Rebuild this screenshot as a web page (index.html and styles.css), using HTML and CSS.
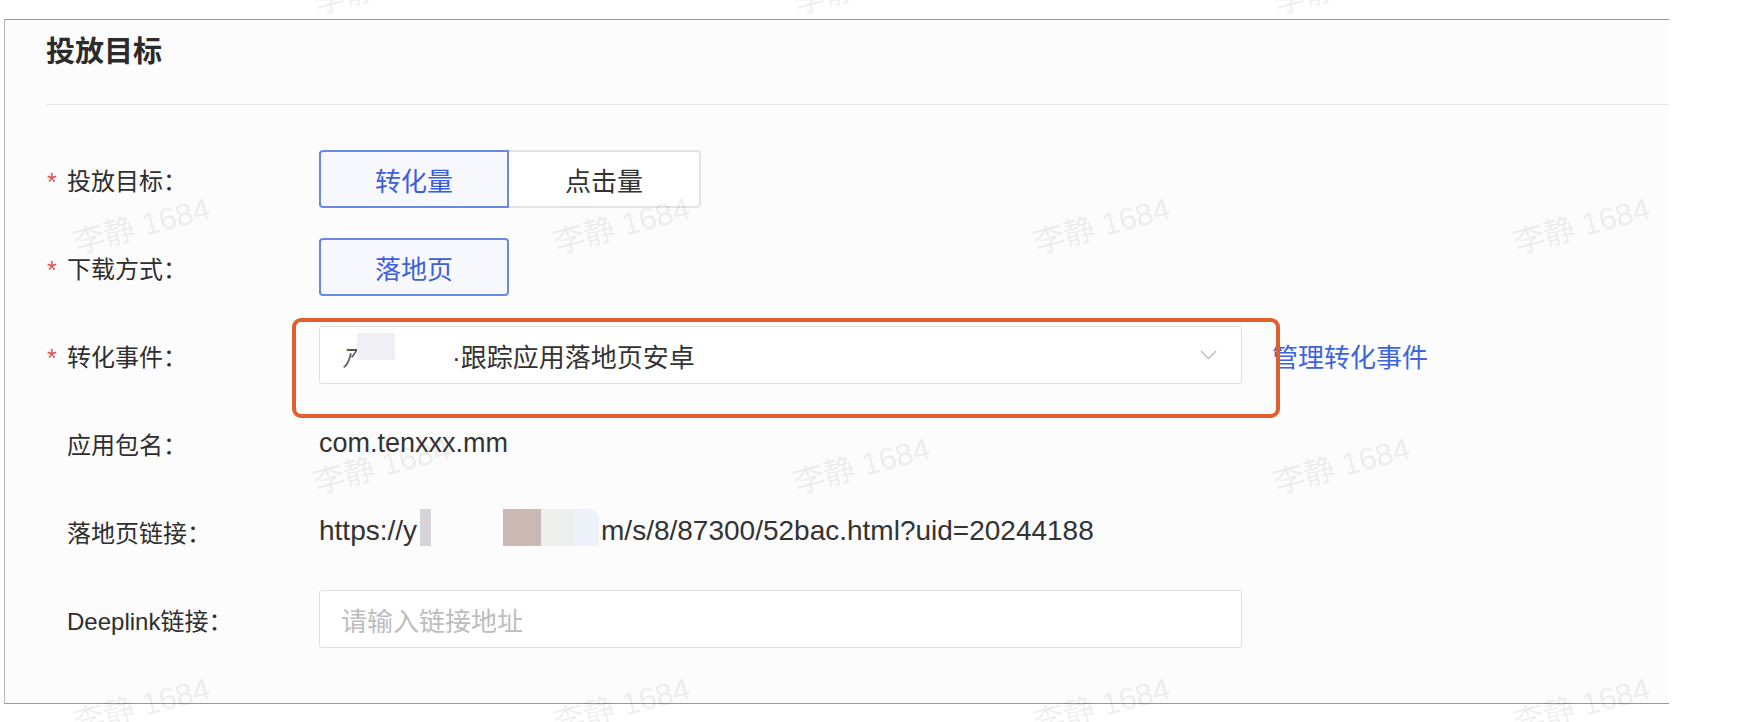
FILE: index.html
```html
<!DOCTYPE html>
<html lang="zh-CN">
<head>
<meta charset="utf-8">
<title>投放目标</title>
<link rel="stylesheet" href="styles.css">
</head>
<body>
<div class="page">
  <section class="card">
    <header class="card-head">
      <h2 class="card-title">投放目标</h2>
    </header>
    <div class="form">
      <div class="row">
        <div class="label"><span class="req">*</span>投放目标：</div>
        <div class="seg">
          <span class="seg-btn first active">转化量</span>
          <span class="seg-btn last">点击量</span>
        </div>
      </div>
      <div class="row">
        <div class="label"><span class="req">*</span>下载方式：</div>
        <div class="seg">
          <span class="seg-btn single active">落地页</span>
        </div>
      </div>
      <div class="row row-event">
        <div class="label"><span class="req">*</span>转化事件：</div>
        <div class="select">
          <span class="sel-head">ｱ</span>
          <span class="mask mask-sel"></span>
          <span class="sel-text">·跟踪应用落地页安卓</span>
          <svg class="chev" width="17" height="10" viewBox="0 0 17 10"><polyline points="1,1 8.5,8.5 16,1" fill="none" stroke="#bdbdbd" stroke-width="1.4"/></svg>
        </div>
        <a class="link">管理转化事件</a>
        <div class="annot"></div>
      </div>
      <div class="row">
        <div class="label plain">应用包名：</div>
        <div class="value">com.tenxxx.mm</div>
      </div>
      <div class="row">
        <div class="label plain">落地页链接：</div>
        <div class="value url"><span>https://y</span><span class="mask m1"></span><span class="mask m2"></span><span class="mask m3"></span><span class="mask m4"></span><span class="mask m5"></span><span>m/s/8/87300/52bac.html?uid=20244188</span></div>
      </div>
      <div class="row">
        <div class="label plain">Deeplink链接：</div>
        <div class="input"><span class="placeholder">请输入链接地址</span></div>
      </div>
    </div>
  </section>
  <div class="wm-layer" aria-hidden="true">
    <span class="wm" style="left:381px;top:-17px">李静 1684</span>
    <span class="wm" style="left:861px;top:-17px">李静 1684</span>
    <span class="wm" style="left:1341px;top:-17px">李静 1684</span>
    <span class="wm" style="left:141px;top:223px">李静 1684</span>
    <span class="wm" style="left:621px;top:223px">李静 1684</span>
    <span class="wm" style="left:1101px;top:223px">李静 1684</span>
    <span class="wm" style="left:1581px;top:223px">李静 1684</span>
    <span class="wm" style="left:381px;top:463px">李静 1684</span>
    <span class="wm" style="left:861px;top:463px">李静 1684</span>
    <span class="wm" style="left:1341px;top:463px">李静 1684</span>
    <span class="wm" style="left:141px;top:703px">李静 1684</span>
    <span class="wm" style="left:621px;top:703px">李静 1684</span>
    <span class="wm" style="left:1101px;top:703px">李静 1684</span>
    <span class="wm" style="left:1581px;top:703px">李静 1684</span>
  </div>
</div>
</body>
</html>
```
FILE: styles.css
```css
* { box-sizing: border-box; }
html, body {
  margin: 0;
  padding: 0;
  background: #ffffff;
}
body {
  font-family: "Liberation Sans", "Noto Sans CJK SC", sans-serif;
  color: #333333;
  width: 1750px;
  height: 722px;
  overflow: hidden;
}
.page {
  position: relative;
  width: 1750px;
  height: 722px;
  padding: 19px 0 0 4px;
}
.card {
  width: 1665px;
  height: 685px;
  background: #fcfcfc;
  border-top: 1px solid #9a9a9a;
  border-left: 1px solid #b8b8b8;
  border-bottom: 1px solid #9a9a9a;
}
.card-head {
  margin-left: 41px;
  height: 85px;
  padding-top: 12px;
  border-bottom: 1px solid #e6e7e8;
}
.card-title {
  margin: 0;
  font-size: 29px;
  line-height: 40px;
  font-weight: 700;
  color: #2b2b2b;
}
.form {
  padding: 45px 0 0 41px;
  display: flex;
  flex-direction: column;
  gap: 30px;
}
.row {
  display: flex;
  align-items: center;
  height: 58px;
}
.row-event {
  position: relative;
}
.label {
  width: 273px;
  flex: none;
  display: flex;
  align-items: center;
  font-size: 24px;
  color: #2e2e2e;
}
.label.plain {
  padding-left: 21px;
}
.req {
  width: 21px;
  flex: none;
  color: #e0534f;
  font-size: 25px;
  padding-left: 1px;
  padding-top: 7px;
}
.seg {
  display: flex;
  height: 58px;
}
.seg-btn {
  height: 58px;
  display: flex;
  align-items: center;
  justify-content: center;
  font-size: 26px;
  color: #333333;
  background: #ffffff;
  border: 2px solid #e3e3e3;
}
.seg-btn.first {
  width: 190px;
  border-radius: 4px 0 0 4px;
  position: relative;
  z-index: 1;
}
.seg-btn.last {
  width: 194px;
  margin-left: -2px;
  border-radius: 0 4px 4px 0;
}
.seg-btn.single {
  width: 190px;
  border-radius: 4px;
}
.seg-btn.active {
  border-color: #6a89e4;
  background: #f6f8fe;
  color: #3d5fd8;
}
.select {
  width: 923px;
  height: 58px;
  flex: none;
  display: flex;
  align-items: center;
  padding-left: 21px;
  padding-right: 24px;
  background: #ffffff;
  border: 1.5px solid #e0e0e0;
  border-radius: 3px;
  font-size: 26px;
  color: #333333;
}
.sel-head {
  font-family: "Noto Sans CJK JP", sans-serif;
  font-style: italic;
  color: #555;
}
.mask {
  display: inline-block;
  flex: none;
}
.mask-sel {
  width: 38px;
  height: 27px;
  margin-left: 3px;
  margin-right: 57px;
  background: #f0f0f4;
  align-self: flex-start;
  margin-top: 6px;
}
.sel-text {
  color: #333333;
}
.chev {
  margin-left: auto;
}
.link {
  margin-left: 30px;
  font-size: 26px;
  color: #3d63dd;
  cursor: pointer;
}
.annot {
  position: absolute;
  left: 246px;
  top: -8px;
  width: 988px;
  height: 100px;
  border: 4px solid #df5f2e;
  border-radius: 9px;
  pointer-events: none;
}
.value {
  font-size: 27px;
  color: #333333;
  display: flex;
  align-items: center;
}
.value.url {
  font-size: 28px;
}
.url .mask {
  height: 37px;
  margin-top: -8px;
}
.m1 { width: 11px; margin-left: 3px; background: #d6d4d9; }
.m2 { width: 72px; background: transparent; }
.m3 { width: 38px; background: #c9b8b3; }
.m4 { width: 34px; background: #eef0ee; }
.m5 { width: 24px; background: #edf2fa; border-top-right-radius: 10px; margin-right: 2px; }
.input {
  width: 923px;
  height: 58px;
  flex: none;
  display: flex;
  align-items: center;
  padding-left: 21px;
  background: #ffffff;
  border: 1.5px solid #e0e0e0;
  border-radius: 3px;
}
.placeholder {
  font-size: 26px;
  color: #bdbdbd;
}
.wm-layer {
  position: absolute;
  inset: 0;
  pointer-events: none;
  overflow: hidden;
}
.wm {
  position: absolute;
  transform: translate(-50%, -50%) rotate(-15deg);
  white-space: nowrap;
  font-size: 31px;
  color: rgba(0, 0, 0, 0.08);
  font-family: "Liberation Sans", "Noto Sans CJK SC", sans-serif;
}
```
